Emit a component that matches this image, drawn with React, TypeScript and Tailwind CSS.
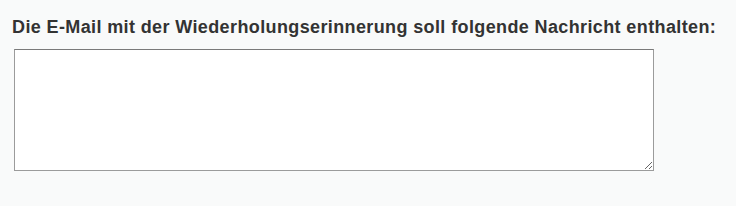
export default function App() {
  return (
    <div className="w-[736px] h-[206px] bg-[#f9fafa] pt-[17px] pl-[12px]" style={{ fontFamily: '"Liberation Sans", Arial, sans-serif' }}>
      <label className="block text-[18px] leading-[21px] tracking-[0.38px] font-bold text-[#333333] whitespace-nowrap">
        Die E-Mail mit der Wiederholungserinnerung soll folgende Nachricht enthalten:
      </label>
      <textarea className="block mt-[11px] ml-[2px] w-[640px] h-[122px] bg-white border border-[#9b9b9b] border-t-[#7a7a7a] outline-none" />
    </div>
  );
}
